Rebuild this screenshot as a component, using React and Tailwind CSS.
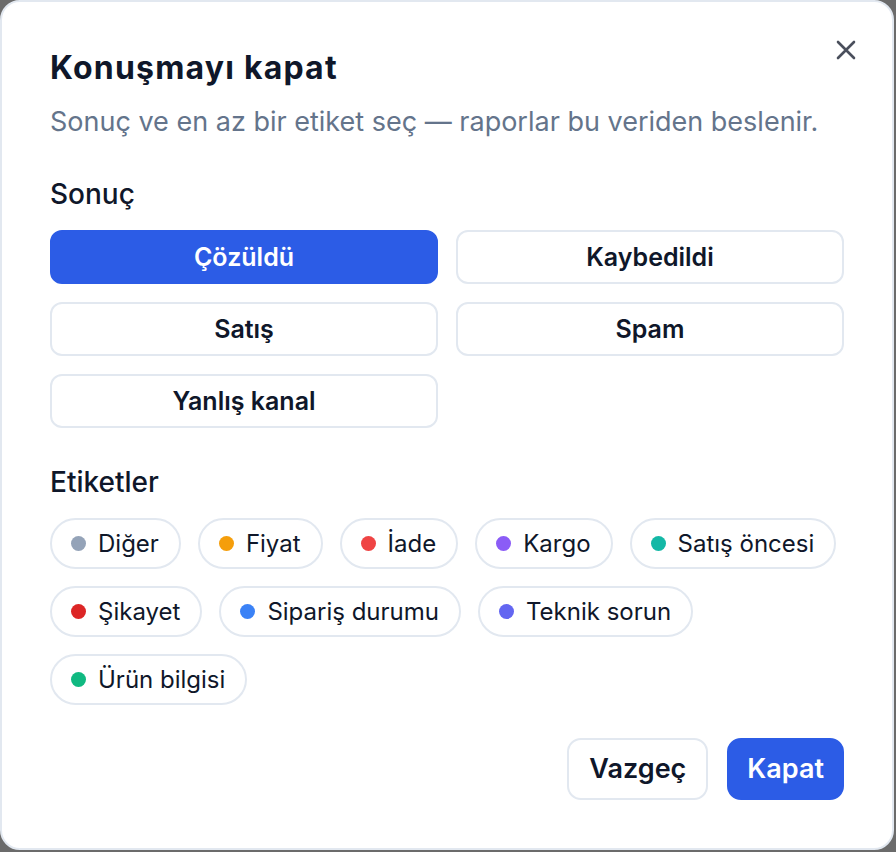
import React, { useState } from "react";

const OUTCOMES = ["Çözüldü", "Kaybedildi", "Satış", "Spam", "Yanlış kanal"];

const TAGS = [
  { label: "Diğer", dot: "bg-[#94a3b8]" },
  { label: "Fiyat", dot: "bg-[#f59e0b]" },
  { label: "İade", dot: "bg-[#ef4444]" },
  { label: "Kargo", dot: "bg-[#8b5cf6]" },
  { label: "Satış öncesi", dot: "bg-[#14b8a6]" },
  { label: "Şikayet", dot: "bg-[#dc2626]" },
  { label: "Sipariş durumu", dot: "bg-[#3b82f6]" },
  { label: "Teknik sorun", dot: "bg-[#6366f1]" },
  { label: "Ürün bilgisi", dot: "bg-[#10b981]" },
];

const App = () => {
  const [outcome, setOutcome] = useState("Çözüldü");
  const [tags, setTags] = useState([]);

  const toggleTag = (label) => {
    setTags((prev) => (prev.includes(label) ? prev.filter((t) => t !== label) : [...prev, label]));
  };

  return (
    <div className="w-[896px] h-[852px] bg-[#6b6b6b] font-['Inter',sans-serif] text-[#0f172a]">
      <div className="relative w-[894px] h-[850px] bg-white border-2 border-[#e2e8f0] rounded-[20px] p-12 flex flex-col">
        {/* Close */}
        <button className="absolute top-[37px] right-[35px] w-[22px] h-[22px] flex items-center justify-center text-[#4a4f5c]">
          <svg width="20" height="20" viewBox="0 0 20 20" fill="none" stroke="currentColor" strokeWidth="2.6" strokeLinecap="round">
            <path d="M2 2 18 18M18 2 2 18" />
          </svg>
        </button>

        <h2 className="text-[32px] leading-[36px] font-bold tracking-[1.2px]">Konuşmayı kapat</h2>
        <p className="mt-5 text-[27px] leading-[32px] text-[#64748b]">
          Sonuç ve en az bir etiket seç — raporlar bu veriden beslenir.
        </p>

        {/* Outcome */}
        <div className="mt-10 text-[28px] leading-[32px] font-medium">Sonuç</div>
        <div className="mt-[20px] grid grid-cols-2 gap-[18px]">
          {OUTCOMES.map((o) => {
            const active = outcome === o;
            return (
              <button
                key={o}
                onClick={() => setOutcome(o)}
                className={`h-[54px] rounded-[12px] border-2 text-[25px] leading-[30px] font-semibold ${
                  active ? "bg-[#2c5ce6] border-[#2c5ce6] text-white" : "bg-white border-[#e2e8f0] text-[#0f172a]"
                }`}
              >
                {o}
              </button>
            );
          })}
        </div>

        {/* Tags */}
        <div className="mt-[38px] text-[28px] leading-[32px] font-medium">Etiketler</div>
        <div className="mt-[20px] flex flex-wrap gap-[17px]">
          {TAGS.map((t) => (
            <button
              key={t.label}
              onClick={() => toggleTag(t.label)}
              className={`h-[51px] rounded-full border-2 pl-[19px] pr-[20px] flex items-center gap-[12px] text-[24px] leading-[30px] ${
                tags.includes(t.label) ? "border-[#2c5ce6] bg-[#eef3fe]" : "border-[#e2e8f0] bg-white"
              }`}
            >
              <span className={`w-[15px] h-[15px] rounded-full ${t.dot}`} />
              <span>{t.label}</span>
            </button>
          ))}
        </div>

        {/* Footer */}
        <div className="mt-auto flex justify-end gap-[19px]">
          <button className="h-[62px] px-[20px] rounded-[14px] border-2 border-[#e2e8f0] bg-white text-[27px] leading-[32px] font-semibold">
            Vazgeç
          </button>
          <button className="h-[62px] px-[18px] rounded-[14px] border-2 border-[#2c5ce6] bg-[#2c5ce6] text-white text-[27px] leading-[32px] font-semibold">
            Kapat
          </button>
        </div>
      </div>
    </div>
  );
};

export default App;
